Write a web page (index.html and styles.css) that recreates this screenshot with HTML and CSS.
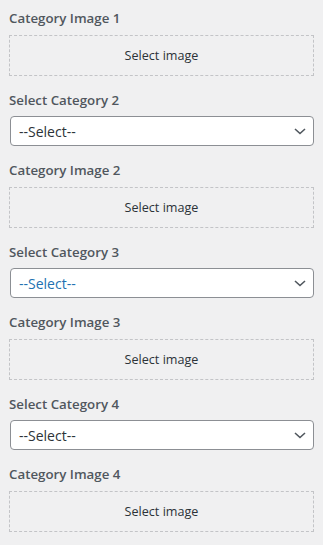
FILE: index.html
```html
<!DOCTYPE html>
<html>
<head>
<meta charset="utf-8">
<link rel="stylesheet" href="styles.css">
</head>
<body>
<div class="panel">
  <div class="field">
    <label class="label label-img">Category Image 1</label>
    <div class="image-drop">Select image</div>
  </div>
  <div class="field">
    <label class="label label-sel">Select Category 2</label>
    <div class="select"><span class="select-text">--Select--</span><svg class="chev" width="12" height="7" viewBox="0 0 12 7"><path d="M1 1 L6 5.5 L11 1" fill="none" stroke="#50575e" stroke-width="1.6"/></svg></div>
  </div>
  <div class="field">
    <label class="label label-img">Category Image 2</label>
    <div class="image-drop">Select image</div>
  </div>
  <div class="field">
    <label class="label label-sel">Select Category 3</label>
    <div class="select"><span class="select-text active">--Select--</span><svg class="chev" width="12" height="7" viewBox="0 0 12 7"><path d="M1 1 L6 5.5 L11 1" fill="none" stroke="#50575e" stroke-width="1.6"/></svg></div>
  </div>
  <div class="field">
    <label class="label label-img">Category Image 3</label>
    <div class="image-drop">Select image</div>
  </div>
  <div class="field">
    <label class="label label-sel">Select Category 4</label>
    <div class="select"><span class="select-text">--Select--</span><svg class="chev" width="12" height="7" viewBox="0 0 12 7"><path d="M1 1 L6 5.5 L11 1" fill="none" stroke="#50575e" stroke-width="1.6"/></svg></div>
  </div>
  <div class="field">
    <label class="label label-img">Category Image 4</label>
    <div class="image-drop">Select image</div>
  </div>
</div>
</body>
</html>
```
FILE: styles.css
```css
html, body {
  margin: 0;
  padding: 0;
  background: #f0f0f1;
}
body {
  font-family: "Open Sans", "Noto Sans", "Liberation Sans", sans-serif;
}
.panel {
  padding: 8px 9px 0 9px;
  display: flex;
  flex-direction: column;
  gap: 14px;
}
.field {
  display: flex;
  flex-direction: column;
}
.label {
  display: block;
  font-size: 13.3px;
  font-weight: 600;
  line-height: 20px;
  color: #50575e;
}
.label-img { margin-bottom: 7px; }
.label-sel { margin-bottom: 6px; }
.image-drop {
  box-sizing: border-box;
  height: 41px;
  border: 1px dashed #c3c4c7;
  display: flex;
  align-items: center;
  justify-content: center;
  font-size: 12.6px;
  color: #2c3338;
}
.select {
  box-sizing: border-box;
  height: 30px;
  margin-left: 1px;
  background: #fff;
  border: 1px solid #8c8f94;
  border-radius: 4px;
  display: flex;
  align-items: center;
  justify-content: space-between;
  padding: 0 7px 0 8px;
}
.select-text {
  font-size: 14px;
  color: #2c3338;
}
.select-text.active {
  color: #2271b1;
}
.chev {
  display: block;
}
```
